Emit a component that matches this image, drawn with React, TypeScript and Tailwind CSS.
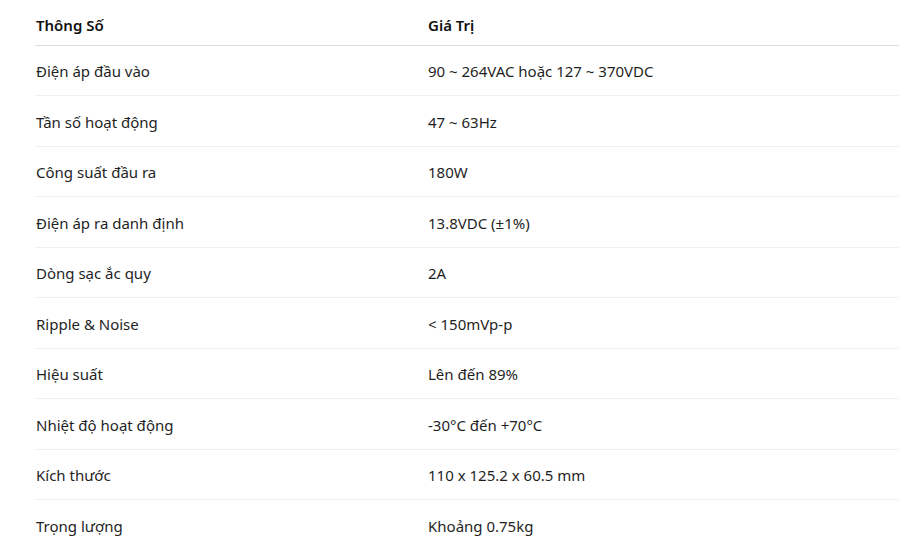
const specs: [string, string][] = [
  ['Điện áp đầu vào', '90 ~ 264VAC hoặc 127 ~ 370VDC'],
  ['Tần số hoạt động', '47 ~ 63Hz'],
  ['Công suất đầu ra', '180W'],
  ['Điện áp ra danh định', '13.8VDC (±1%)'],
  ['Dòng sạc ắc quy', '2A'],
  ['Ripple & Noise', '< 150mVp-p'],
  ['Hiệu suất', 'Lên đến 89%'],
  ['Nhiệt độ hoạt động', '-30°C đến +70°C'],
  ['Kích thước', '110 x 125.2 x 60.5 mm'],
  ['Trọng lượng', 'Khoảng 0.75kg'],
];

export default function App() {
  return (
    <div className="w-[920px] h-[548px] overflow-hidden bg-white pl-[35px] pr-[21px] font-['Noto_Sans',sans-serif] text-[15px] text-[#1f1f1f]">
      <table className="w-full border-collapse">
        <thead>
          <tr className="h-[45px] border-b border-[#dcdcdc]">
            <th className="w-[393px] pl-px pt-[6px] text-left font-semibold text-[#111]">Thông Số</th>
            <th className="pt-[6px] text-left font-semibold text-[#111]">Giá Trị</th>
          </tr>
        </thead>
        <tbody>
          {specs.map(([k, v]) => (
            <tr key={k} className="h-[50.5px] border-b border-[#efefef]">
              <td className="pl-px pt-[2px]">{k}</td>
              <td className="pt-[2px]">{v}</td>
            </tr>
          ))}
        </tbody>
      </table>
    </div>
  );
}
